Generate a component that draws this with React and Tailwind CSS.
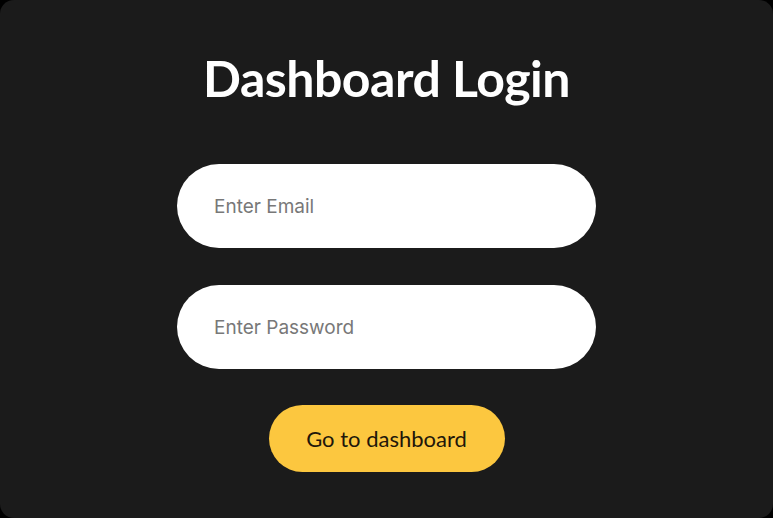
export default function App() {
  return (
    <div className="w-[773px] h-[518px] bg-black">
      <div
        className="w-full h-full rounded-[14px] bg-[#1b1b1b] flex flex-col items-center pt-[50px]"
        style={{ fontFamily: 'Lato, "Noto Sans", sans-serif' }}
      >
        <h1 className="text-[50px] leading-[56px] font-bold text-white tracking-[-0.5px]">
          Dashboard Login
        </h1>

        <div className="mt-[58px] flex flex-col gap-[37px]">
          <input
            type="email"
            placeholder="Enter Email"
            className="w-[419px] h-[84px] rounded-full bg-white pl-[37px] pr-6 text-[19px] text-[#333] placeholder:text-[#787878] outline-none"
            style={{ fontFamily: 'Inter, sans-serif' }}
          />
          <input
            type="password"
            placeholder="Enter Password"
            className="w-[419px] h-[84px] rounded-full bg-white pl-[37px] pr-6 text-[19px] text-[#333] placeholder:text-[#787878] outline-none"
            style={{ fontFamily: 'Inter, sans-serif' }}
          />
        </div>

        <button className="mt-[36px] w-[236px] h-[67px] rounded-full bg-[#fcc73f] text-[22px] text-[#21160a]">
          Go to dashboard
        </button>
      </div>
    </div>
  );
}
